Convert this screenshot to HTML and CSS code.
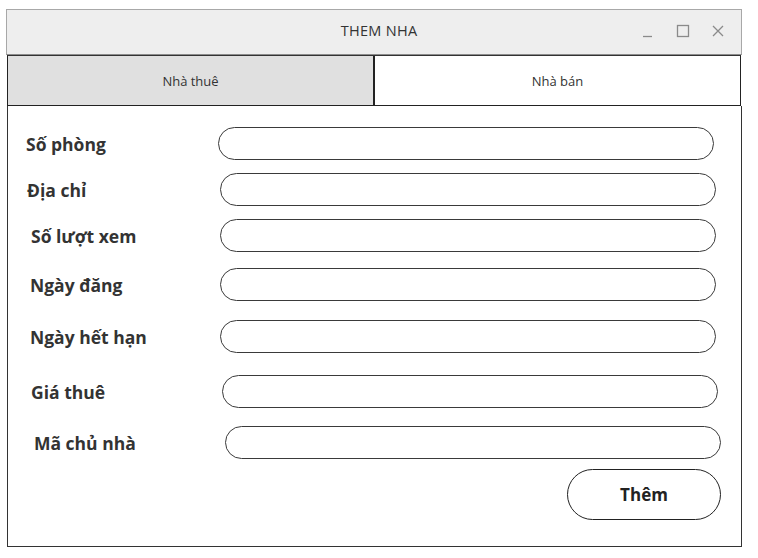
FILE: index.html
```html
<!DOCTYPE html>
<html lang="vi">
<head>
<meta charset="utf-8">
<title>THEM NHA</title>
<link rel="stylesheet" href="styles.css">
</head>
<body>
<div class="window">
  <div class="titlebar">
    <div class="title">THEM NHA</div>
    <div class="controls">
      <svg class="ctl" width="14" height="14" viewBox="0 0 14 14"><line x1="2" y1="12.5" x2="11" y2="12.5" stroke="#8a8a8a" stroke-width="1.3"/></svg>
      <svg class="ctl" width="14" height="14" viewBox="0 0 14 14"><rect x="1.5" y="1.5" width="11" height="11" fill="none" stroke="#8a8a8a" stroke-width="1.3"/></svg>
      <svg class="ctl" width="14" height="14" viewBox="0 0 14 14"><path d="M2 2 L12 12 M12 2 L2 12" stroke="#8a8a8a" stroke-width="1.3"/></svg>
    </div>
  </div>
  <div class="tabs">
    <div class="tab active">Nhà thuê</div>
    <div class="tab">Nhà bán</div>
  </div>
  <div class="body">
    <div class="row r1"><span class="label">Số phòng</span><div class="field"></div></div>
    <div class="row r2"><span class="label">Địa chỉ</span><div class="field"></div></div>
    <div class="row r3"><span class="label">Số lượt xem</span><div class="field"></div></div>
    <div class="row r4"><span class="label">Ngày đăng</span><div class="field"></div></div>
    <div class="row r5"><span class="label">Ngày hết hạn</span><div class="field"></div></div>
    <div class="row r6"><span class="label">Giá thuê</span><div class="field"></div></div>
    <div class="row r7"><span class="label">Mã chủ nhà</span><div class="field"></div></div>
    <div class="actions"><button class="btn">Thêm</button></div>
  </div>
</div>
</body>
</html>
```
FILE: styles.css
```css
* { box-sizing: border-box; }
html, body { margin: 0; padding: 0; background: #fff; }
body { font-family: "Open Sans", "Noto Sans", sans-serif; color: #222; }

.window {
  margin: 9px 0 0 6px;
  width: 736px;
}

.titlebar {
  height: 46px;
  background: #eeeeee;
  border: 1px solid #a8a8a8;
  border-bottom: 1px solid #8c8c8c;
  display: flex;
  align-items: center;
  justify-content: center;
  position: relative;
}
.title {
  font-size: 14.5px;
  color: #333;
  letter-spacing: 0.3px;
  margin-left: 10px;
  margin-top: -4px;
}
.controls {
  position: absolute;
  right: 16px;
  top: 14px;
  display: flex;
  gap: 21px;
}

.tabs {
  display: flex;
  height: 51px;
  margin-left: 1px;
  width: 734px;
  border: 1.5px solid #222;
  border-top: 1.5px solid #333;
}
.tab {
  flex: 1;
  display: flex;
  align-items: center;
  justify-content: center;
  font-size: 13px;
  color: #333;
}
.tab.active {
  background: #e0e0e0;
  border-right: 2px solid #222;
}

.body {
  margin-left: 1px;
  width: 735px;
  height: 441px;
  border: 1.5px solid #333;
  border-top: none;
  padding-top: 21px;
  display: flex;
  flex-direction: column;
}

.row {
  display: flex;
  align-items: center;
  height: 33px;
}
.label {
  font-weight: 700;
  font-size: 17.5px;
  color: #333;
  width: 211px;
  line-height: 1;
  padding-top: 2px;
}
.field {
  width: 496px;
  height: 33px;
  border: 1.5px solid #3a3a3a;
  border-radius: 17px;
  background: #fff;
}

.r1 .label { padding-left: 18px; width: 210px; }
.r2 { margin-top: 13px; }
.r2 .label { padding-left: 19px; width: 212px; }
.r3 { margin-top: 13px; }
.r3 .label { padding-left: 23px; width: 212px; }
.r4 { margin-top: 16px; }
.r4 .label { padding-left: 22px; width: 212px; }
.r5 { margin-top: 19px; }
.r5 .label { padding-left: 22px; width: 212px; }
.r6 { margin-top: 22px; }
.r6 .label { padding-left: 23px; width: 214px; }
.r7 { margin-top: 18px; }
.r7 .label { padding-left: 26px; width: 217px; }

.actions {
  display: flex;
  justify-content: flex-end;
  padding-right: 20px;
  margin-top: 10px;
}
.btn {
  width: 154px;
  height: 51px;
  border: 1.5px solid #222;
  border-radius: 26px;
  background: #fff;
  font-family: "Open Sans", "Noto Sans", sans-serif;
  font-weight: 700;
  font-size: 17px;
  color: #222;
}
```
